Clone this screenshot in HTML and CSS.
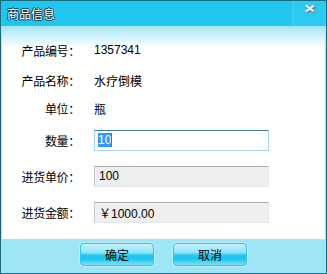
FILE: index.html
```html
<!DOCTYPE html>
<html lang="zh-CN">
<head>
    <meta charset="UTF-8">
    <title>商品信息</title>
    <link rel="stylesheet" href="styles.css">
</head>
<body>
    <div class="window">
        <div class="titlebar">
            <span class="title">商品信息</span>
            <span class="close">
                <svg width="12" height="9" viewBox="0 0 12 9">
                    <path d="M2 1.5 L10 7.5 M10 1.5 L2 7.5" stroke="#4f6d7a" stroke-width="3.4" transform="translate(0.6 0.6)"/>
                    <path d="M2 1.5 L10 7.5 M10 1.5 L2 7.5" stroke="#e4ecef" stroke-width="2.4"/>
                </svg>
            </span>
        </div>
        <div class="content">
            <div class="row r1"><span class="label">产品编号：</span><span class="value">1357341</span></div>
            <div class="row r2"><span class="label">产品名称：</span><span class="value">水疗倒模</span></div>
            <div class="row r3"><span class="label">单位：</span><span class="value">瓶</span></div>
            <div class="row r4"><span class="label">数量：</span><div class="field focus"><span class="sel">10</span><span class="caret"></span></div></div>
            <div class="row r5"><span class="label">进货单价：</span><div class="field disabled">100</div></div>
            <div class="row r6"><span class="label">进货金额：</span><div class="field disabled">￥1000.00</div></div>
        </div>
        <div class="footer">
            <button class="btn">确定</button>
            <button class="btn">取消</button>
        </div>
    </div>
</body>
</html>
```

FILE: styles.css
```css
body {
    margin: 0;
    font-family: "Noto Sans CJK SC", "Liberation Sans", sans-serif;
    font-size: 12px;
    color: #000;
}
.window {
    width: 325px;
    height: 272px;
    border: 1px solid #1b6b82;
    background: #9ee5f6;
    display: flex;
    flex-direction: column;
}
.titlebar {
    height: 25px;
    background: #1fc6ee;
    display: flex;
    align-items: stretch;
    justify-content: space-between;
}
.title {
    padding-left: 6px;
    line-height: 25px;
    color: #fff;
    font-size: 12px;
    text-shadow: 1px 0 0 #16384a, -1px 0 0 #16384a, 0 1px 0 #16384a, 0 -1px 0 #16384a;
}
.close {
    width: 34px;
    border-left: 1px solid #43cff0;
    background: #2ccaf0;
    display: flex;
    justify-content: center;
    padding-top: 3px;
    box-sizing: border-box;
}
.content {
    margin: 0 1px;
    height: 213px;
    box-sizing: border-box;
    padding-top: 9px;
    background: linear-gradient(to bottom, #a5e5f6 0, #ffffff 22px, #ffffff 100%);
}
.row {
    display: flex;
    align-items: center;
    height: 36px;
}
.r1, .r2 { height: 30px; }
.r3 { height: 27px; }
.label {
    width: 78px;
    text-align: right;
    flex-shrink: 0;
    letter-spacing: -0.3px;
}
.value {
    margin-left: 14px;
    font-family: "Liberation Sans", "Noto Sans CJK SC", sans-serif;
}
.r2 .value, .r3 .value {
    font-family: "Noto Sans CJK SC", sans-serif;
}
.field {
    margin-left: 14px;
    width: 175px;
    height: 21px;
    box-sizing: border-box;
    padding-left: 3px;
    display: flex;
    align-items: center;
    font-family: "Liberation Sans", "Noto Sans CJK SC", sans-serif;
}
.focus {
    background: #fff;
    border: 1px solid #a6d2ef;
    border-top-color: #3d7bad;
}
.sel {
    background: #3399ff;
    color: #fff;
    line-height: 14px;
}
.caret {
    width: 1px;
    height: 14px;
    background: #b25a1c;
}
.disabled {
    background: #efefef;
    border: 1px solid #e2e8ee;
    border-top-color: #ababab;
    border-left-color: #c8c8c8;
    padding-left: 4px;
}
.footer {
    flex: 1;
    display: flex;
    justify-content: center;
    gap: 19px;
    padding-top: 4px;
}
.btn {
    width: 74px;
    height: 23px;
    border: 1px solid #37c3ea;
    border-radius: 4px;
    box-shadow: 0 0 0 1px #b8eefb;
    background: linear-gradient(to bottom, #c6f4fd 0%, #8fe3f8 40%, #1fc7ef 55%, #1cc6ee 70%, #7fdff6 100%);
    font-family: "Noto Sans CJK SC", sans-serif;
    font-size: 12px;
    color: #000;
    padding: 0;
}
```
